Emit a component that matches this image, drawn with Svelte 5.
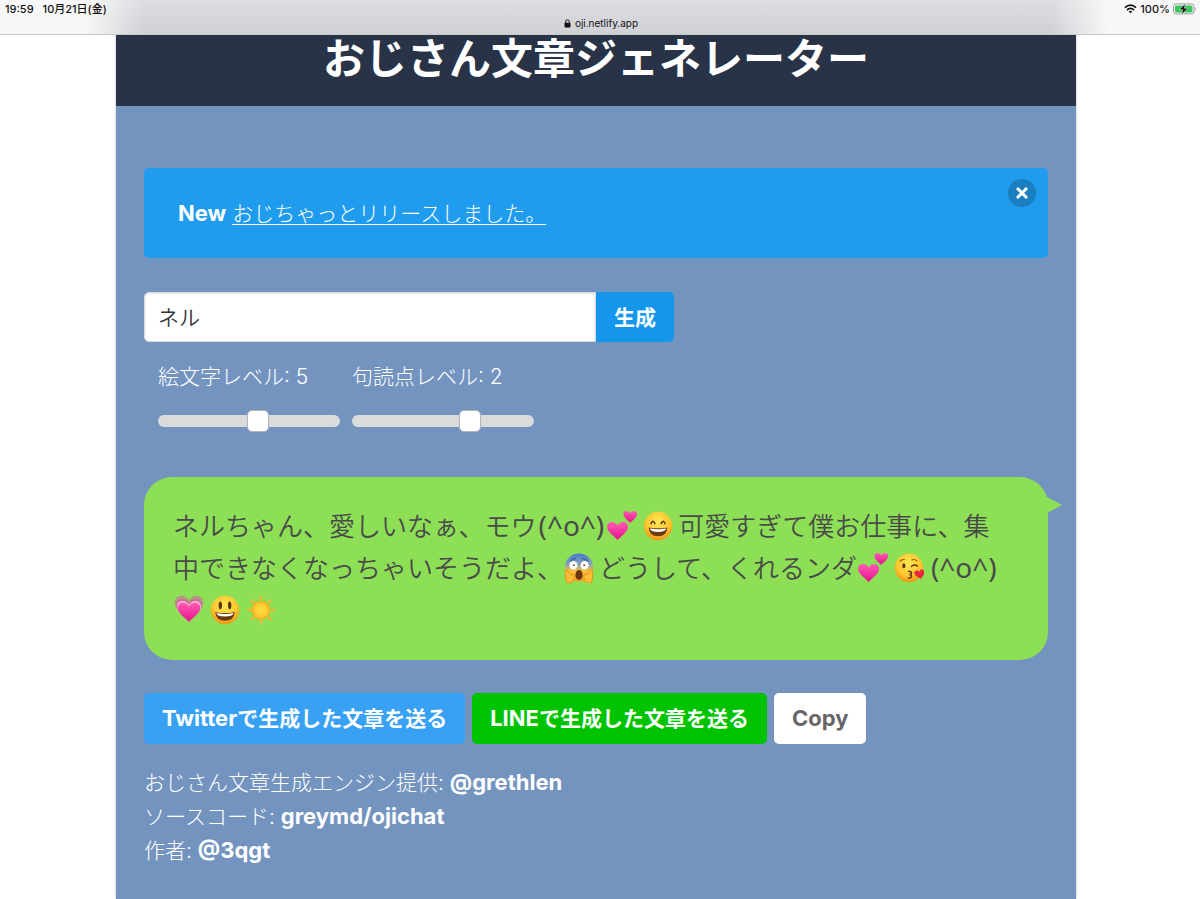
<script lang="ts">
  type Part = { text: string } | { kaomoji: string } | { emoji: string; label: string };

  let name = $state("ネル");
  let emojiLevel = $state(5);
  let punctuationLevel = $state(2);
  let showNews = $state(true);

  const message: Part[] = [
    { text: "ネルちゃん、愛しいなぁ、モウ" },
    { kaomoji: "(^o^)" },
    { emoji: "hearts", label: "二つのハート" },
    { emoji: "smile", label: "笑顔" },
    { text: "可愛すぎて僕お仕事に、集中できなくなっちゃいそうだよ、" },
    { emoji: "scream", label: "恐怖" },
    { text: "どうして、くれるンダ" },
    { emoji: "hearts", label: "二つのハート" },
    { emoji: "kiss", label: "投げキッス" },
    { kaomoji: "(^o^)" },
    { emoji: "growing", label: "ときめき" },
    { emoji: "grin", label: "にっこり" },
    { emoji: "sun", label: "太陽" },
  ];

  const credits = [
    { title: "おじさん文章生成エンジン提供", link: "@grethlen" },
    { title: "ソースコード", link: "greymd/ojichat" },
    { title: "作者", link: "@3qgt" },
  ];

  const rays = [0, 45, 90, 135, 180, 225, 270, 315];
  const heart = "M16 28C10 22 2 17 2 10.500C2 6.500 5 4 8.500 4C12 4 15 6 16 9C17 6 20 4 23.500 4C27 4 30 6.500 30 10.500C30 17 22 22 16 28Z";

  const copyMessage = () => {
    const text = message
      .map((p) => ("text" in p ? p.text : "kaomoji" in p ? p.kaomoji : ""))
      .join("");
    navigator.clipboard?.writeText(text);
  };
</script>

{#snippet emoji(kind: string, label: string)}
  <svg class="emoji" viewBox="0 0 32 32" role="img" aria-label={label}>
    {#if kind === "hearts"}
      <path d={heart} fill="url(#pink)" transform="translate(-1.500 8.500) scale(.8)" />
      <path d={heart} fill="url(#pink)" transform="translate(16.500 -2) scale(.52)" />
    {:else if kind === "growing"}
      <path d={heart} fill="#b29a80" transform="translate(-1.600 -3.500) scale(1.100)" />
      <path d={heart} fill="#cf7094" transform="translate(.2 0) scale(.99)" />
      <path d={heart} fill="#f4b4d6" transform="translate(1.300 2.700) scale(.92)" />
      <path d={heart} fill="url(#pink)" transform="translate(2.200 4.700) scale(.86)" />
    {:else if kind === "sun"}
      {#each rays as angle}
        <path d="M14.300 4.500L16 .5L17.700 4.500Z" fill="#fdb52e" stroke="#fdb52e" stroke-width=".6" stroke-linejoin="round" transform="rotate({angle} 16 16)" />
      {/each}
      <circle cx="16" cy="16" r="10" fill="url(#sun)" />
    {:else if kind === "scream"}
      <circle cx="16" cy="15.500" r="15" fill="url(#scared)" />
      <path d="M7 8.500Q9 5.500 12 6M20 6Q23 5.500 25 8.500" fill="none" stroke="#365a9a" stroke-width="1.300" stroke-linecap="round" />
      <ellipse cx="10" cy="13" rx="4.300" ry="4.600" fill="#fff" />
      <ellipse cx="22" cy="13" rx="4.300" ry="4.600" fill="#fff" />
      <circle cx="10.500" cy="13" r=".9" fill="#533419" />
      <circle cx="21.500" cy="13" r=".9" fill="#533419" />
      <ellipse cx="16" cy="23.500" rx="3.800" ry="5.400" fill="#6b3510" />
      <path d="M1.500 18Q3 16 4.500 20L7 23Q11 22 11 26Q11 31 7 32H3Q1 28 1.500 18Z" fill="#ffbb35" stroke="#dc8619" stroke-width=".8" />
      <path d="M30.500 18Q29 16 27.500 20L25 23Q21 22 21 26Q21 31 25 32H29Q31 28 30.500 18Z" fill="#ffbb35" stroke="#dc8619" stroke-width=".8" />
    {:else}
      <circle cx="16" cy="16" r="15.200" fill="url(#face)" />
      {#if kind === "smile"}
        <path d="M8.500 13.500Q10.500 8.500 12.700 13.500M19.300 13.500Q21.500 8.500 23.500 13.500" fill="none" stroke="#5c3510" stroke-width="1.600" stroke-linecap="round" />
        <path d="M6 17.500Q16 19.500 26 17.500Q25.500 27 16 27Q6.500 27 6 17.500Z" fill="#6b3b14" />
        <path d="M7.300 18.700Q16 20.300 24.700 18.700Q24 22.300 16 22.300Q8 22.300 7.300 18.700Z" fill="#fff" />
      {:else if kind === "grin"}
        <ellipse cx="11" cy="11" rx="1.800" ry="4.200" fill="#5c3510" />
        <ellipse cx="21" cy="11" rx="1.800" ry="4.200" fill="#5c3510" />
        <path d="M5.500 18Q16 20.500 26.500 18Q25.500 27.500 16 27.500Q6.500 27.500 5.500 18Z" fill="#6b3b14" />
        <path d="M6.800 19.200Q16 21.300 25.200 19.200Q24.500 23 16 23Q7.500 23 6.800 19.200Z" fill="#fff" />
      {:else}
        <path d="M6.500 9Q8 6.500 11 7M19 7.500Q22 6 24.500 8.500" fill="none" stroke="#8a5714" stroke-width="1.200" stroke-linecap="round" />
        <ellipse cx="10.500" cy="13.500" rx="1.700" ry="2.700" fill="#5c3510" />
        <path d="M18.500 14.500Q21.500 11.500 25 14" fill="none" stroke="#5c3510" stroke-width="1.500" stroke-linecap="round" />
        <path d="M15.500 19.500C20.500 19.500 19 23 16.500 23C20 23 19.500 27.200 15.500 26.700" fill="none" stroke="#5c3510" stroke-width="1.500" stroke-linecap="round" />
        <path d={heart} fill="#e9263f" transform="translate(20 18) rotate(-12) scale(.4)" />
      {/if}
    {/if}
  </svg>
{/snippet}

<svg class="defs" aria-hidden="true">
  <defs>
    <linearGradient id="pink" x1="0" y1="0" x2="0" y2="1">
      <stop offset="0" stop-color="#ff5cb4" />
      <stop offset="1" stop-color="#e4108c" />
    </linearGradient>
    <radialGradient id="face" cx=".5" cy=".35" r=".65">
      <stop offset="0" stop-color="#ffe854" />
      <stop offset=".65" stop-color="#fdc62f" />
      <stop offset="1" stop-color="#f09416" />
    </radialGradient>
    <radialGradient id="sun">
      <stop offset="0" stop-color="#ffdf3c" />
      <stop offset=".7" stop-color="#ffcb30" />
      <stop offset="1" stop-color="#f9a41f" />
    </radialGradient>
    <linearGradient id="scared" x1="0" y1="0" x2="0" y2="1">
      <stop offset="0" stop-color="#4479cf" />
      <stop offset=".4" stop-color="#8aa3b8" />
      <stop offset=".62" stop-color="#f8c03b" />
      <stop offset="1" stop-color="#f5a01f" />
    </linearGradient>
  </defs>
</svg>

<div class="page">
  <div class="statusbar">
    <div class="clock"><span>19:59</span><span>10月21日(金)</span></div>
    <div class="address">
      <svg width="7" height="9" viewBox="0 0 7 9" aria-hidden="true">
        <path d="M1.700 4V2.600a1.800 1.800 0 0 1 3.600 0V4" fill="none" stroke="#111" />
        <rect x=".5" y="3.800" width="6" height="4.700" rx=".8" fill="#111" />
      </svg>
      <span>oji.netlify.app</span>
    </div>
    <div class="battery">
      <svg width="13" height="10" viewBox="0 0 13 10" fill="none" stroke="#111" stroke-width="1.700" aria-hidden="true">
        <path d="M.9 3.700Q6.500 -1.300 12.100 3.700" />
        <path d="M3 6Q6.500 2.900 10 6" />
        <path d="M6.500 9.300L4.700 7.500Q6.500 6 8.300 7.500Z" fill="#111" stroke="none" />
      </svg>
      <span>100%</span>
      <svg width="24" height="12" viewBox="0 0 24 12" aria-hidden="true">
        <rect x=".5" y=".9" width="20.500" height="10" rx="2.800" fill="none" stroke="#999" />
        <rect x="2" y="2.400" width="17.500" height="7" rx="1.600" fill="#35c759" />
        <path d="M22.200 4.200Q23.800 6 22.200 7.800Z" fill="#999" />
        <path d="M12.500 .5L6 6.700H9.800L8.500 11.500L15 5.200H11.200Z" fill="#111" stroke="#f4f4f4" stroke-width=".5" />
      </svg>
    </div>
  </div>

  <main>
    <header><h1>おじさん文章ジェネレーター</h1></header>

    <section>
      {#if showNews}
        <div class="notification">
          <strong class="latin">New</strong> <a href="#ojichat">おじちゃっとリリースしました。</a>
          <button class="delete" aria-label="閉じる" onclick={() => (showNews = false)}>
            <svg width="12" height="12" viewBox="0 0 12 12" stroke="#fff" stroke-width="3" aria-hidden="true">
              <path d="M1 1L11 11M11 1L1 11" />
            </svg>
          </button>
        </div>
      {/if}

      <form onsubmit={(e) => e.preventDefault()}>
        <div class="field">
          <input type="text" aria-label="名前" bind:value={name} />
          <button class="generate">生成</button>
        </div>
        <div class="levels">
          <label>
            <span>絵文字レベル: {emojiLevel}</span>
            <input type="range" min="0" max="9" bind:value={emojiLevel} />
          </label>
          <label>
            <span>句読点レベル: {punctuationLevel}</span>
            <input type="range" min="0" max="3" bind:value={punctuationLevel} />
          </label>
        </div>
      </form>

      <p class="bubble">
        {#each message as part}{#if "text" in part}{part.text}{:else if "kaomoji" in part}<span class="kaomoji">{part.kaomoji}</span>{:else}{@render emoji(part.emoji, part.label)}{/if}{/each}
      </p>

      <div class="buttons">
        <a class="button twitter" href="#twitter"><span class="latin">Twitter</span>で生成した文章を送る</a>
        <a class="button line" href="#line"><span class="latin">LINE</span>で生成した文章を送る</a>
        <button class="button copy" onclick={copyMessage}><span class="latin">Copy</span></button>
      </div>

      <footer>
        {#each credits as credit}
          <div>{credit.title}: <a class="latin" href="#credit">{credit.link}</a></div>
        {/each}
      </footer>
    </section>
  </main>
</div>

<style>
  :global(body) {
    margin: 0;
    background: #fff;
    font-family: Inter, "Noto Sans CJK JP", sans-serif;
    font-optical-sizing: none;
  }

  .page,
  .page * {
    box-sizing: border-box;
  }

  .page {
    display: flex;
    flex-direction: column;
    min-height: 100vh;
  }

  .defs {
    position: absolute;
    width: 0;
    height: 0;
  }

  button,
  input {
    font-family: inherit;
  }

  button {
    border: none;
    cursor: pointer;
  }

  .statusbar {
    display: grid;
    grid-template-columns: 1fr auto 1fr;
    height: 35px;
    padding: 2px 3px 4px 5px;
    border-bottom: 1px solid #c8cacc;
    background:
      linear-gradient(to right, #f7f7f7 84px, transparent 144px, transparent calc(100% - 148px), #f7f7f7 calc(100% - 92px)),
      linear-gradient(#dddee2, #cfd1d5);
    color: #111;
    font-size: 11px;
    font-weight: 500;
    line-height: 14px;
  }

  .clock {
    display: flex;
    gap: 9px;
  }

  .address {
    display: flex;
    align-items: center;
    align-self: end;
    gap: 4px;
    font-size: 10px;
    font-weight: 400;
  }

  .battery {
    display: flex;
    align-items: center;
    align-self: start;
    justify-content: flex-end;
    gap: 3px;
  }

  main {
    display: flex;
    flex: 1;
    flex-direction: column;
    width: 80%;
    margin-left: calc(10% - 4px);
    box-shadow: 0 0 2px rgba(10, 10, 10, 0.3);
    clip-path: inset(0 -4px);
  }

  header {
    padding-bottom: 23px;
    background: #283348;
    text-align: center;
  }

  h1 {
    margin: 0;
    color: #fff;
    font-size: 42px;
    font-weight: 600;
    line-height: 48px;
  }

  section {
    flex: 1;
    padding: 62px 28px 32px;
    background: #7494c0;
    color: #fff;
    font-size: 21px;
    font-weight: 300;
  }

  /* Inter runs small next to the kana */
  .latin {
    font-size: 22px;
    font-weight: 700;
    line-height: 1;
  }

  .notification {
    position: relative;
    margin-bottom: 34px;
    padding: 30px 52px 28px 34px;
    border-radius: 5px;
    background: #209cee;
    line-height: 32px;
  }

  .notification a {
    color: inherit;
    text-decoration: underline 1px;
    text-underline-offset: 3px;
  }

  .delete {
    position: absolute;
    top: 11px;
    right: 12px;
    display: flex;
    align-items: center;
    justify-content: center;
    width: 28px;
    height: 28px;
    padding: 0;
    border-radius: 50%;
    background: rgba(10, 10, 10, 0.2);
  }

  form {
    max-width: 530px;
  }

  .field {
    display: flex;
  }

  .field input {
    flex: 1;
    min-width: 0;
    height: 50px;
    padding: 0 14px 2px 13px;
    border: 1px solid #dbdbdb;
    border-radius: 5px 0 0 5px;
    box-shadow: inset 0 1px 2px rgba(10, 10, 10, 0.1);
    color: #363636;
    font-size: 21px;
    font-weight: 350;
  }

  .generate {
    padding: 0 18px 2px;
    border-radius: 0 5px 5px 0;
    background: #1496ed;
    color: #fff;
    font-size: 21px;
    font-weight: 600;
  }

  .levels {
    display: flex;
    gap: 12px;
    padding: 18px 14px 0;
  }

  .levels label {
    display: flex;
    flex-direction: column;
    gap: 16px;
    width: 182px;
    line-height: 34px;
  }

  .levels input {
    appearance: none;
    width: 100%;
    height: 22px;
    margin: 0;
    background: transparent;
  }

  .levels input::-webkit-slider-runnable-track {
    height: 12px;
    border-radius: 6px;
    background: #dbdbdb;
  }

  .levels input::-webkit-slider-thumb {
    appearance: none;
    width: 22px;
    height: 22px;
    margin-top: -5px;
    border: 1px solid #b5b5b5;
    border-radius: 5px;
    background: #fff;
  }

  .bubble {
    position: relative;
    margin: 45px 0 33px;
    padding: 29px 40px 28px 29px;
    border-radius: 28px;
    background: #8de055;
    color: #4a4a4a;
    font-size: 26px;
    font-weight: 350;
    line-height: 42px;
  }

  /* tail of the speech bubble */
  .bubble::after {
    content: "";
    position: absolute;
    top: 20px;
    right: -14px;
    border-top: 8px solid transparent;
    border-bottom: 8px solid transparent;
    border-left: 15px solid #8de055;
  }

  .kaomoji {
    margin: 0 2px;
    font-family: "Noto Sans", sans-serif;
    font-size: 28px;
    font-weight: 400;
    line-height: 1;
  }

  .emoji {
    width: 30px;
    height: 30px;
    margin: 0 5px 0 1px;
    vertical-align: -5px;
  }

  .buttons {
    display: flex;
    flex-wrap: wrap;
    gap: 7px;
  }

  .button {
    height: 51px;
    padding: 0 18px;
    border-radius: 5px;
    color: #fff;
    font-size: 21px;
    font-weight: 600;
    line-height: 51px;
    text-decoration: none;
  }

  .twitter {
    background: #38a1f3;
  }

  .line {
    background: #00c300;
  }

  .copy {
    background: #fff;
    color: #666;
  }

  footer {
    margin-top: 22px;
    line-height: 34px;
  }

  footer a {
    color: inherit;
    text-decoration: none;
  }
</style>
